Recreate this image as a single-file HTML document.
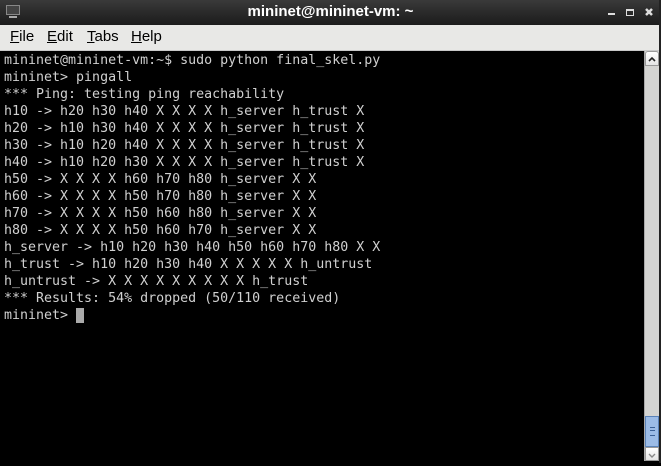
<!DOCTYPE html><html><head><style>
body{margin:0;width:661px;height:463px;overflow:hidden;background:#000;font-family:"Liberation Sans",sans-serif;position:relative}
#title{position:absolute;left:0;top:0;width:661px;height:25px;background:linear-gradient(#3a3a3a,#2a2a2a 50%,#1c1c1c);color:#fff;font-weight:bold;font-size:15px;text-align:center;line-height:24px}
#menu{position:absolute;left:0;top:25px;width:659px;height:25px;background:#e8e8e6;border-bottom:1px solid #c8c8c8;font-size:15px;color:#000}
#menu span{position:absolute;top:3px}
#term{position:absolute;left:0;top:51px;width:644px;height:412px;background:#000;color:#d0d0d0;font-family:"DejaVu Sans Mono","Liberation Mono",monospace;font-size:13.3px;line-height:17px;white-space:pre;padding-left:4px;padding-top:1px;box-sizing:border-box}
#sb{position:absolute;left:644px;top:51px;width:15px;height:410px;background:#d4d4d2;border-left:1px solid #aaa}
#rb{position:absolute;left:659px;top:0;width:2px;height:463px;background:#222}
</style></head><body>
<div id="title">mininet@mininet-vm: ~
<svg style="position:absolute;left:6px;top:5px" width="14" height="14"><rect x="0.5" y="0.5" width="13" height="9" fill="#444" stroke="#888"/><rect x="3" y="11" width="8" height="2" fill="#aaa"/></svg>
<svg style="position:absolute;left:607px;top:8px" width="50" height="10"><rect x="1" y="5" width="7" height="2" fill="#ddd"/><rect x="19.5" y="1.5" width="7" height="6" fill="none" stroke="#ddd"/><rect x="19" y="1" width="8" height="2" fill="#ddd"/><path d="M39 1l6 6M45 1l-6 6" stroke="#ddd" stroke-width="2.5"/></svg>
</div>
<div id="menu"><span style="left:10px"><u>F</u>ile</span><span style="left:47px"><u>E</u>dit</span><span style="left:87px"><u>T</u>abs</span><span style="left:131px"><u>H</u>elp</span></div>
<div id="term">mininet@mininet-vm:~$ sudo python final_skel.py
mininet&gt; pingall
*** Ping: testing ping reachability
h10 -&gt; h20 h30 h40 X X X X h_server h_trust X
h20 -&gt; h10 h30 h40 X X X X h_server h_trust X
h30 -&gt; h10 h20 h40 X X X X h_server h_trust X
h40 -&gt; h10 h20 h30 X X X X h_server h_trust X
h50 -&gt; X X X X h60 h70 h80 h_server X X
h60 -&gt; X X X X h50 h70 h80 h_server X X
h70 -&gt; X X X X h50 h60 h80 h_server X X
h80 -&gt; X X X X h50 h60 h70 h_server X X
h_server -&gt; h10 h20 h30 h40 h50 h60 h70 h80 X X
h_trust -&gt; h10 h20 h30 h40 X X X X X h_untrust
h_untrust -&gt; X X X X X X X X X h_trust
*** Results: 54% dropped (50/110 received)
mininet&gt; <span style="background:#aaa"> </span></div>
<div id="sb">
<div style="position:absolute;left:0;top:0;width:14px;height:15px;background:linear-gradient(#fff,#e4e4e4);border:1px solid #999;border-radius:3px 3px 0 0;box-sizing:border-box"><svg width="12" height="12"><path d="M3 8l3-3 3 3" stroke="#222" stroke-width="1.6" fill="none"/></svg></div>
<div style="position:absolute;left:0;top:365px;width:14px;height:31px;background:#9bbbe6;border:1px solid #5a82b8;box-sizing:border-box"><div style="position:absolute;left:4px;top:10px;width:5px;height:7px;border-top:1px solid #3a5f95;border-bottom:1px solid #3a5f95"></div><div style="position:absolute;left:4px;top:13px;width:5px;height:1px;background:#3a5f95"></div></div>
<div style="position:absolute;left:0;top:396px;width:14px;height:14px;background:linear-gradient(#fff,#e4e4e4);border:1px solid #999;box-sizing:border-box"><svg width="12" height="12"><path d="M3 5l3 3 3-3" stroke="#888" stroke-width="1.4" fill="none"/></svg></div>
</div>
<div id="rb"></div>
</body></html>
